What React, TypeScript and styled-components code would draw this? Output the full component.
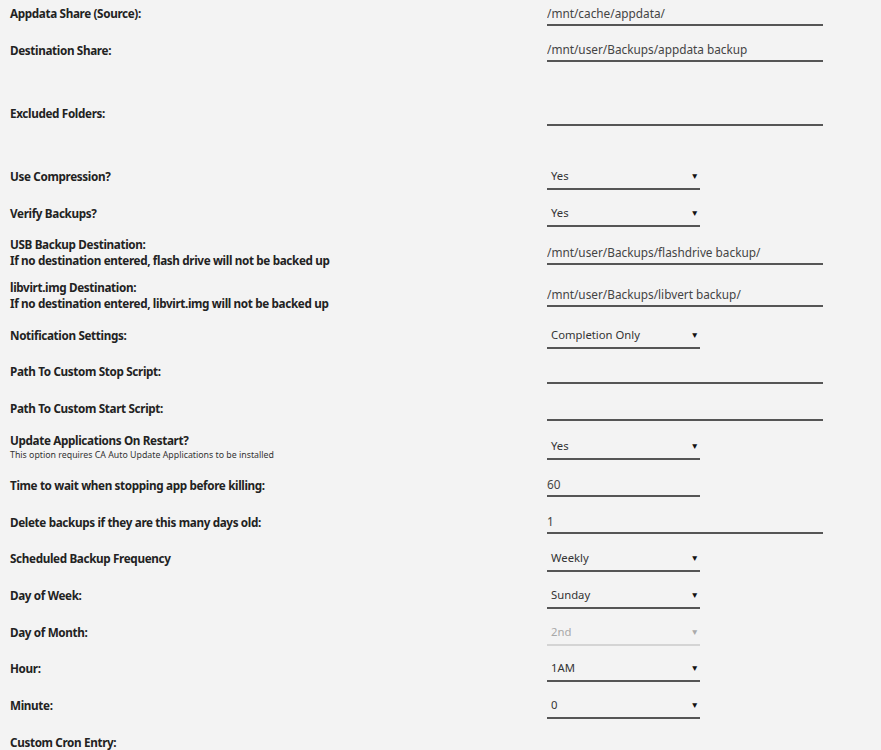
import React from "react";
import styled, { createGlobalStyle } from "styled-components";

const GlobalStyle = createGlobalStyle`
  html, body {
    margin: 0;
    padding: 0;
    background: #f3f3f3;
  }
  body {
    font-family: "Noto Sans", "Open Sans", sans-serif;
    color: #222;
    overflow: hidden;
  }
`;

const Form = styled.div`
  display: flex;
  flex-direction: column;
  margin-top: -5.35px;
  padding-left: 10px;
  width: 813px;
`;

const Row = styled.div<{ $h?: number }>`
  display: flex;
  align-items: center;
  height: ${(p) => p.$h ?? 36.7}px;
`;

const LabelCol = styled.div`
  width: 537px;
  flex: none;
  display: flex;
  flex-direction: column;
`;

const Label = styled.span`
  font-size: 11.7px;
  font-weight: 700;
  line-height: 16px;
  color: #222;
  letter-spacing: -0.35px;
`;

const Note = styled.span`
  font-size: 8.8px;
  font-weight: 400;
  line-height: 12px;
  color: #333;
  margin-top: 1px;
`;

const TextField = styled.div<{ $w?: number }>`
  box-sizing: border-box;
  width: ${(p) => p.$w ?? 277}px;
  height: 25px;
  padding: 4px 0 3px 0;
  line-height: 16px;
  font-size: 11.8px;
  color: #444;
  border-bottom: 2px solid #555;
  white-space: nowrap;
  overflow: hidden;
`;

const SelectBox = styled.div<{ $disabled?: boolean }>`
  box-sizing: border-box;
  width: 153px;
  height: 28px;
  display: flex;
  align-items: center;
  justify-content: space-between;
  padding: 6px 1px 4px 4px;
  line-height: 16px;
  font-size: 11.3px;
  color: ${(p) => (p.$disabled ? "#a8a8a8" : "#333")};
  border-bottom: 2px solid ${(p) => (p.$disabled ? "#d4d4d4" : "#555")};
`;

const Arrow = styled.span<{ $disabled?: boolean }>`
  font-size: 8.5px;
  line-height: 8px;
  color: ${(p) => (p.$disabled ? "#aaa" : "#111")};
`;

type Field =
  | { kind: "text"; value?: string; width?: number }
  | { kind: "select"; value: string; disabled?: boolean }
  | { kind: "none" };

type Item = {
  label: string;
  sub?: string;
  note?: string;
  h?: number;
  field: Field;
};

const items: Item[] = [
  { label: "Appdata Share (Source):", field: { kind: "text", value: "/mnt/cache/appdata/" } },
  { label: "Destination Share:", field: { kind: "text", value: "/mnt/user/Backups/appdata backup" } },
  { label: "Excluded Folders:", h: 90, field: { kind: "text" } },
  { label: "Use Compression?", field: { kind: "select", value: "Yes" } },
  { label: "Verify Backups?", field: { kind: "select", value: "Yes" } },
  {
    label: "USB Backup Destination:",
    sub: "If no destination entered, flash drive will not be backed up",
    h: 42,
    field: { kind: "text", value: "/mnt/user/Backups/flashdrive backup/" },
  },
  {
    label: "libvirt.img Destination:",
    sub: "If no destination entered, libvirt.img will not be backed up",
    h: 43,
    field: { kind: "text", value: "/mnt/user/Backups/libvert backup/" },
  },
  { label: "Notification Settings:", field: { kind: "select", value: "Completion Only" } },
  { label: "Path To Custom Stop Script:", field: { kind: "text" } },
  { label: "Path To Custom Start Script:", field: { kind: "text" } },
  {
    label: "Update Applications On Restart?",
    note: "This option requires CA Auto Update Applications to be installed",
    h: 40,
    field: { kind: "select", value: "Yes" },
  },
  { label: "Time to wait when stopping app before killing:", field: { kind: "text", value: "60", width: 153 } },
  { label: "Delete backups if they are this many days old:", field: { kind: "text", value: "1" } },
  { label: "Scheduled Backup Frequency", field: { kind: "select", value: "Weekly" } },
  { label: "Day of Week:", field: { kind: "select", value: "Sunday" } },
  { label: "Day of Month:", field: { kind: "select", value: "2nd", disabled: true } },
  { label: "Hour:", field: { kind: "select", value: "1AM" } },
  { label: "Minute:", field: { kind: "select", value: "0" } },
  { label: "Custom Cron Entry:", field: { kind: "none" } },
];

function FieldView({ field }: { field: Field }) {
  if (field.kind === "text") {
    return <TextField $w={field.width}>{field.value ?? ""}</TextField>;
  }
  if (field.kind === "select") {
    return (
      <SelectBox $disabled={field.disabled}>
        <span>{field.value}</span>
        <Arrow $disabled={field.disabled}>▼</Arrow>
      </SelectBox>
    );
  }
  return null;
}

export default function App() {
  return (
    <>
      <GlobalStyle />
      <Form>
        {items.map((it) => (
          <Row key={it.label} $h={it.h}>
            <LabelCol>
              <Label>{it.label}</Label>
              {it.sub && <Label>{it.sub}</Label>}
              {it.note && <Note>{it.note}</Note>}
            </LabelCol>
            <FieldView field={it.field} />
          </Row>
        ))}
      </Form>
    </>
  );
}
